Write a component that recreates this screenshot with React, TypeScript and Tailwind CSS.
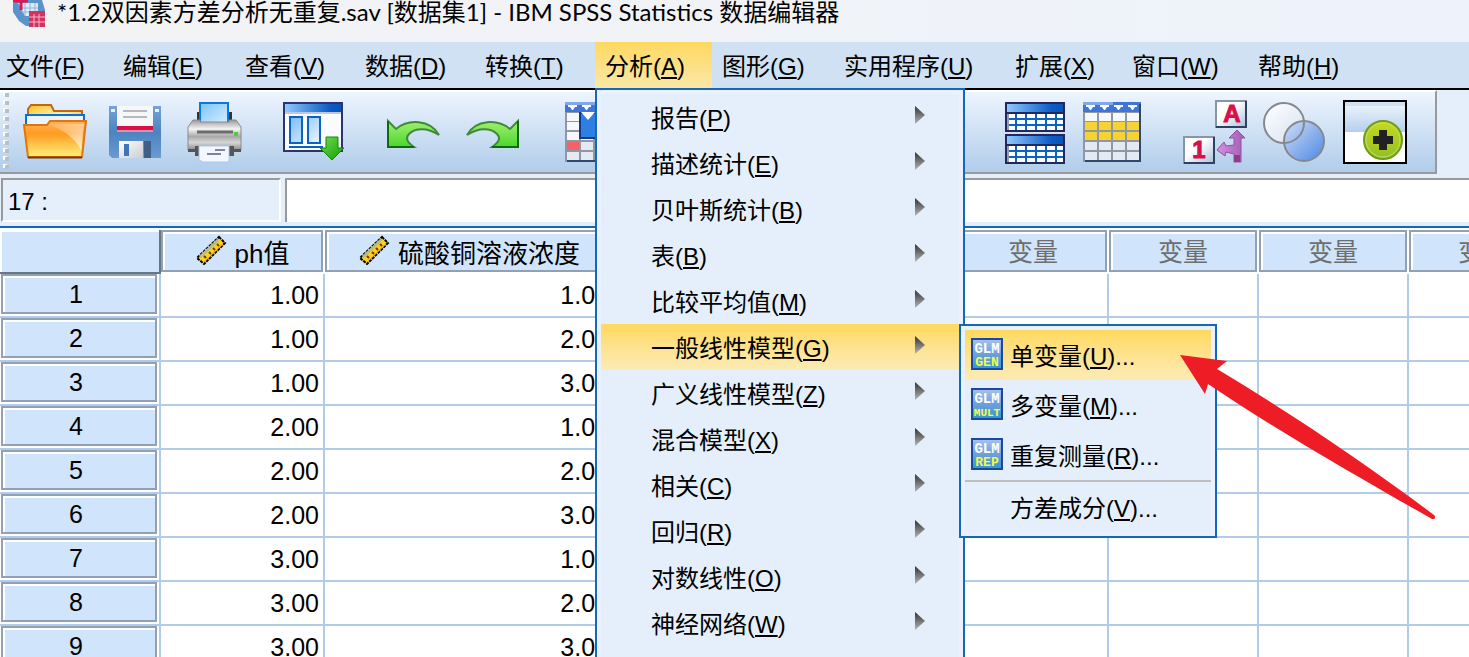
import type { ReactNode } from "react";

const MENUS = [
  { label: "文件", key: "F", width: "w-[117px]" },
  { label: "编辑", key: "E", width: "w-[122px]" },
  { label: "查看", key: "V", width: "w-[120px]" },
  { label: "数据", key: "D", width: "w-[120px]" },
  { label: "转换", key: "T", width: "w-[120px]" },
  { label: "分析", key: "A", width: "w-[117px]" },
  { label: "图形", key: "G", width: "w-[122px]" },
  { label: "实用程序", key: "U", width: "w-[171px]" },
  { label: "扩展", key: "X", width: "w-[117px]" },
  { label: "窗口", key: "W", width: "w-[126px]" },
  { label: "帮助", key: "H", width: "w-[120px]" },
];

const ANALYZE = [
  ["报告", "P"],
  ["描述统计", "E"],
  ["贝叶斯统计", "B"],
  ["表", "B"],
  ["比较平均值", "M"],
  ["一般线性模型", "G"],
  ["广义线性模型", "Z"],
  ["混合模型", "X"],
  ["相关", "C"],
  ["回归", "R"],
  ["对数线性", "O"],
  ["神经网络", "W"],
];

const GLM = [
  { label: "单变量", key: "U", tag: "GEN" },
  { label: "多变量", key: "M", tag: "MULT" },
  { label: "重复测量", key: "R", tag: "REP" },
];

const ROWS = [
  ["1.00", "1.00"],
  ["1.00", "2.00"],
  ["1.00", "3.00"],
  ["2.00", "1.00"],
  ["2.00", "2.00"],
  ["2.00", "3.00"],
  ["3.00", "1.00"],
  ["3.00", "2.00"],
  ["3.00", "3.00"],
];

const EMPTY_COLS = [0, 1, 2, 3, 4];

function Label({ label, k, dots }: { label: string; k: string; dots?: boolean }) {
  return (
    <span className="whitespace-nowrap">
      {label}(<span className="underline decoration-2 underline-offset-2">{k}</span>){dots ? "..." : ""}
    </span>
  );
}

/* ---------- toolbar icons, all on a 64px grid ---------- */

function Svg({ children }: { children: ReactNode }) {
  return (
    <svg viewBox="0 0 64 64" className="block size-16" aria-hidden="true">
      {children}
    </svg>
  );
}

function OpenIcon() {
  return (
    <Svg>
      <defs>
        <linearGradient id="fb" x1="0" y1="0" x2="1" y2="1">
          <stop offset="0" stopColor="#ffc21a" />
          <stop offset=".5" stopColor="#fff0b8" />
          <stop offset="1" stopColor="#ff9d2b" />
        </linearGradient>
        <linearGradient id="ff" x1="0" y1="0" x2="0" y2="1">
          <stop offset="0" stopColor="#ffb55e" />
          <stop offset=".35" stopColor="#ff9b1f" />
          <stop offset="1" stopColor="#fff27c" />
        </linearGradient>
        <linearGradient id="fs" x1="0" y1="0" x2="1" y2="1">
          <stop offset="0" stopColor="#fff" stopOpacity=".1" />
          <stop offset="1" stopColor="#fff" stopOpacity=".7" />
        </linearGradient>
      </defs>
      <path d="M5 20V9L8 5H28L31 11H59V26H5Z" fill="url(#fb)" stroke="#c9640c" strokeWidth="2" />
      <path d="M3 26V15H61V26" fill="#eaf3ff" stroke="#0a70d8" strokeWidth="2" />
      <path d="M1 25H24L27 21H63L59 57H5Z" fill="url(#ff)" stroke="#e8730a" strokeWidth="2" />
      <path d="M26 24H61L58 50Q50 34 26 24Z" fill="url(#fs)" />
      <path d="M5 57.500H59" stroke="#7c3b06" strokeWidth="2" />
    </Svg>
  );
}

function SaveIcon() {
  return (
    <Svg>
      <defs>
        <linearGradient id="sv" x1="0" y1="0" x2="0" y2="1">
          <stop offset="0" stopColor="#74a5d4" />
          <stop offset=".5" stopColor="#4c83c0" />
          <stop offset="1" stopColor="#6a9bd0" />
        </linearGradient>
        <linearGradient id="sh" x1="0" y1="0" x2="1" y2="1">
          <stop offset="0" stopColor="#fff" />
          <stop offset="1" stopColor="#c9cdd3" />
        </linearGradient>
      </defs>
      <path d="M6 6H58V58H9L6 55Z" fill="url(#sv)" />
      <path d="M8 9h4v3H8zM52 9h4v3h-4z" fill="#e8f1fa" />
      <path d="M14 6H50V26H14Z" fill="#f6f7f9" />
      <path d="M20 11H44M20 17H44" stroke="#b5b9bf" strokeWidth="2" />
      <path d="M14 26H50V30H14Z" fill="#d80f4a" />
      <path d="M14 30H50V32H14Z" fill="#e78aa6" />
      <path d="M16 41H40V58H16Z" fill="url(#sh)" />
      <path d="M41 41H48V58H41Z" fill="#3f5f86" />
      <path d="M21 44H26V56H21Z" fill="#3a78ba" />
    </Svg>
  );
}

function PrintIcon() {
  return (
    <Svg>
      <defs>
        <linearGradient id="pp" x1="0" y1="0" x2="1" y2="1">
          <stop offset="0" stopColor="#7cc2fb" />
          <stop offset="1" stopColor="#d8efff" />
        </linearGradient>
        <linearGradient id="pb" x1="0" y1="0" x2="0" y2="1">
          <stop offset="0" stopColor="#9a9a9a" />
          <stop offset=".3" stopColor="#f4f4f4" />
          <stop offset=".55" stopColor="#a9a9a9" />
          <stop offset=".75" stopColor="#d6d6d6" />
          <stop offset="1" stopColor="#8a8a8a" />
        </linearGradient>
      </defs>
      <path d="M14 12H17V22H14ZM46 12H49V22H46Z" fill="#333" />
      <path d="M17 3H45V24H17Z" fill="url(#pp)" stroke="#0b78df" strokeWidth="2" />
      <path d="M10 20H17V22H46V20H53L58 27V50H5V27Z" fill="url(#pb)" stroke="#8b8b8b" />
      <path d="M5 49H12V52H5ZM51 49H58V52H51Z" fill="#555" />
      <path d="M14 32H50" stroke="#6b6b6b" strokeWidth="3" />
      <path d="M51 32H55V36H51Z" fill="#4fcf3a" />
      <path d="M12 46H51V56H12Z" fill="#555" />
      <path d="M16 46H46V62H20L16 60Z" fill="#f3f7ff" stroke="#a9c6ee" />
      <path d="M32 50H42M24 54H38" stroke="#7d8598" strokeWidth="2" />
    </Svg>
  );
}

function DialogIcon() {
  return (
    <Svg>
      <defs>
        <linearGradient id="bar" x1="0" y1="0" x2="1" y2="0">
          <stop offset="0" stopColor="#8fc8ff" />
          <stop offset=".8" stopColor="#0b5cc4" />
          <stop offset="1" stopColor="#0a54b8" />
        </linearGradient>
        <linearGradient id="pn" x1="0" y1="0" x2="1" y2="1">
          <stop offset="0" stopColor="#7dbcf5" />
          <stop offset="1" stopColor="#eaf6ff" />
        </linearGradient>
        <linearGradient id="ga" x1="0" y1="0" x2="1" y2="1">
          <stop offset="0" stopColor="#6fe04c" />
          <stop offset="1" stopColor="#129a08" />
        </linearGradient>
      </defs>
      <path d="M1 3H59V51H1Z" fill="#fafcff" stroke="#2d3270" strokeWidth="2" />
      <path d="M2 4H58V12H2Z" fill="url(#bar)" />
      <path d="M2 13H58" stroke="#8a93b8" strokeWidth="1" />
      <path d="M7 17H19V43H7ZM25 17H37V43H25Z" fill="url(#pn)" stroke="#0a62c2" strokeWidth="2" />
      <path d="M6 47H40" stroke="#0a62c2" strokeWidth="2" />
      <path d="M43 37H55V48H61L49 60L37 48H43Z" fill="url(#ga)" stroke="#14840c" />
    </Svg>
  );
}

function UndoIcon({ flip }: { flip?: boolean }) {
  return (
    <Svg>
      <defs>
        <linearGradient id="un" x1="0" y1="0" x2="0" y2="1">
          <stop offset="0" stopColor="#a2f070" />
          <stop offset="1" stopColor="#4bd62d" />
        </linearGradient>
      </defs>
      <g transform={flip ? "translate(60 0) scale(-1 1)" : undefined}>
        <path
          d="M5 21L13 29C25 19 47 19 56 35C44 27 32 28 26 34C22 38 24 42 31 47H5Z"
          fill="url(#un)"
          stroke="#3f8a3a"
          strokeWidth="2"
        />
        <path d="M5 21V47H31" fill="none" stroke="#0d6b0a" strokeWidth="2" />
      </g>
    </Svg>
  );
}

function Sheet({ x = 0 }: { x?: number }) {
  return (
    <g transform={`translate(${x} 0)`}>
      <path d="M0 2H58V62H0Z" fill="#9097a3" />
      <path d="M0 2H58V12H0Z" fill="#3f74d8" />
      <path d="M0 2H30V5H0Z" fill="#7fa8ee" />
      {[2, 16, 30, 44].map((c) => (
        <g key={c}>
          <path d={`M${c + 1} 5h9v2h-2l-2 3h-1l-2-3h-2z`} fill="#fff" />
          {[13, 22, 32, 42, 52].map((r) => (
            <rect key={r} x={c} y={r} width="12" height="8" fill={r > 40 ? "#e4eaf3" : "#f6f8fb"} />
          ))}
        </g>
      ))}
      <path d="M57 4V61H2" fill="none" stroke="#33476b" strokeWidth="2" />
    </g>
  );
}

function GotoIcon() {
  return (
    <Svg>
      <Sheet x={2} />
      <path d="M4 42H16V50H4Z" fill="#f4616b" />
      <path d="M17 13H62V38H17Z" fill="#2f7fe0" stroke="#123c86" strokeWidth="2" />
      <path d="M18 12L25 20L32 12Z" fill="#fff" />
    </Svg>
  );
}

function SelectIcon() {
  return (
    <Svg>
      <Sheet />
      {[2, 16, 30, 44].map((c) => (
        <g key={c} fill="#f7d332">
          <rect x={c} y="22" width="12" height="8" />
          <rect x={c} y="32" width="12" height="8" />
        </g>
      ))}
    </Svg>
  );
}

function SplitIcon() {
  return (
    <Svg>
      {[2, 34].map((y) => (
        <g key={y} transform={`translate(2 ${y})`}>
          <path d="M0 0H60V30H0Z" fill="#23275e" />
          <path d="M2 2H58V10H2Z" fill="url(#bar)" />
          <path d="M2 12H58V28H2Z" fill="#0a62c2" />
          <path d="M2 12H4V28H2Z" fill="#9a9ab0" />
          {[4, 12, 22, 32, 42, 52].map((x, i) => (
            <g key={x} fill="#fff">
              <rect x={x} y="12" width={[6, 8, 8, 8, 8, 6][i]} height="4" />
              <rect x={x} y="18" width={[6, 8, 8, 8, 8, 6][i]} height="4" />
              <rect x={x} y="24" width={[6, 8, 8, 8, 8, 6][i]} height="4" />
            </g>
          ))}
        </g>
      ))}
    </Svg>
  );
}

function ValueLabelsIcon() {
  return (
    <Svg>
      <defs>
        <linearGradient id="tl" x1="0" y1="0" x2="1" y2="1">
          <stop offset=".4" stopColor="#fff" />
          <stop offset="1" stopColor="#a9bfdc" />
        </linearGradient>
        <linearGradient id="pu" x1="0" y1="0" x2="1" y2="0">
          <stop offset="0" stopColor="#d292dc" />
          <stop offset="1" stopColor="#a35bb4" />
        </linearGradient>
      </defs>
      <path d="M33 1H63V27H33Z" fill="url(#tl)" stroke="#8795ab" strokeWidth="2" />
      <path d="M63 1V27H33" fill="none" stroke="#2d4162" strokeWidth="2" />
      <path d="M1 37H31V63H1Z" fill="url(#tl)" stroke="#8795ab" strokeWidth="2" />
      <path d="M31 37V63H1" fill="none" stroke="#2d4162" strokeWidth="2" />
      <text x="49" y="22" textAnchor="middle" fontSize="24" fontWeight="900" fill="#d80f4a" stroke="#d80f4a" fontFamily="Liberation Sans, sans-serif">
        A
      </text>
      <text x="16" y="58" textAnchor="middle" fontSize="24" fontWeight="900" fill="#d80f4a" stroke="#d80f4a" fontFamily="Liberation Sans, sans-serif">
        1
      </text>
      <path
        d="M54 30L62 38H58V62H51V54L43 52L42 56L34 50L41 42L43 46L51 45V38H46Z"
        fill="url(#pu)"
        stroke="#9450a6"
      />
      <path d="M51 55H57V62H51Z" fill="#8c3f86" />
    </Svg>
  );
}

function SetsIcon() {
  return (
    <Svg>
      <defs>
        <linearGradient id="c1" x1="0" y1="0" x2="1" y2="1">
          <stop offset="0" stopColor="#fff" />
          <stop offset="1" stopColor="#d6e1f2" />
        </linearGradient>
        <linearGradient id="c2" x1="0" y1="0" x2="1" y2="1">
          <stop offset="0" stopColor="#cfdff8" />
          <stop offset="1" stopColor="#4d87e2" />
        </linearGradient>
      </defs>
      <circle cx="21" cy="23" r="20" fill="url(#c1)" />
      <circle cx="41" cy="41" r="20" fill="url(#c2)" />
      <g fill="none" stroke="#85898f" strokeWidth="2">
        <circle cx="21" cy="23" r="20" />
        <circle cx="41" cy="41" r="20" />
      </g>
    </Svg>
  );
}

function CustomizeIcon() {
  return (
    <Svg>
      <defs>
        <linearGradient id="cb" x1="0" y1="0" x2="0" y2="1">
          <stop offset="0" stopColor="#e9f2fc" />
          <stop offset="1" stopColor="#b4cfeb" />
        </linearGradient>
        <linearGradient id="cg" x1="0" y1="0" x2="0" y2="1">
          <stop offset="0" stopColor="#c9d91f" />
          <stop offset="1" stopColor="#8fc023" />
        </linearGradient>
      </defs>
      <path d="M1 1H63V63H1Z" fill="#fff" stroke="#000" strokeWidth="2" />
      <path d="M2 2H62V6H2Z" fill="#cfe1f2" />
      <path d="M2 6H62V32H2Z" fill="url(#cb)" />
      <circle cx="40" cy="40" r="19" fill="url(#cg)" stroke="#6f9e16" strokeWidth="2" />
      <circle cx="40" cy="40" r="17" fill="none" stroke="#c5e070" />
      <path d="M36 30H44V36H50V44H44V50H36V44H30V36H36Z" fill="#222" />
    </Svg>
  );
}

function ToolButton({ label, children }: { label: string; children: ReactNode }) {
  return (
    <button type="button" aria-label={label} className="size-16 shrink-0">
      {children}
    </button>
  );
}

function Ruler() {
  return (
    <svg viewBox="0 0 32 32" className="size-8 shrink-0" aria-hidden="true">
      <path d="M24 2L30 8L9 29L2 23Z" fill="#ffcf1c" stroke="#000" strokeWidth="2" strokeDasharray="3 1" />
      <path d="M23 5L5 22" stroke="#b9bb86" strokeWidth="3" />
      <path d="M28 9L9 27" stroke="#ff9f1c" strokeWidth="1" />
      <path d="M22 9l2 2M18 13l2 2M14 17l2 2M9 21l2 2" stroke="#5c4a00" strokeWidth="2" />
    </svg>
  );
}

function AppIcon() {
  return (
    <svg viewBox="0 0 34 30" className="h-[30px] w-[34px]" aria-hidden="true">
      <path d="M3 0H29L32 10V26H13L6 21L0 12V3Z" fill="#5b93cb" />
      <path d="M5 3H25V16H12Z" fill="#dfeaf6" />
      <path d="M12 3V16M17 3V16M22 3V16M6 8H25M8 12H25" stroke="#8db4dc" strokeWidth="1" />
      <path d="M0 1H15M8 0V10" stroke="#e0164e" strokeWidth="3" />
      <path d="M16 11H32V27H16Z" fill="#d4335f" />
      <path d="M21 14V27M26 14V27M16 17H32M16 22H32" stroke="#f3b8c8" strokeWidth="1" />
    </svg>
  );
}

function GlmIcon({ tag }: { tag: string }) {
  return (
    <svg viewBox="0 0 32 32" className="size-8 shrink-0" aria-hidden="true">
      <defs>
        <linearGradient id="gl" x1="0" y1="0" x2="0" y2="1">
          <stop offset="0" stopColor="#a9c2ea" />
          <stop offset=".5" stopColor="#6f9fd8" />
          <stop offset="1" stopColor="#2f9ad4" />
        </linearGradient>
      </defs>
      <path d="M1 1H31V31H1Z" fill="url(#gl)" stroke="#1b48a0" strokeWidth="2" />
      <g textAnchor="middle" fontFamily="Liberation Mono, monospace" fontWeight="700">
        <text x="16" y="15" fontSize="14" fill="#fff">
          GLM
        </text>
        <text x="16" y="28" fontSize={tag.length > 3 ? 11 : 13} fill="#f6f94e">
          {tag}
        </text>
      </g>
    </svg>
  );
}

function GlmMenu() {
  return (
    <div className="absolute left-full top-0 z-20 w-[258px] border-2 border-[#1269b9] bg-[#e4effb] p-1 shadow-[inset_0_0_0_4px_#eaf0fd]">
      {GLM.map((m, i) => (
        <button
          key={m.tag}
          type="button"
          className={`flex h-[50px] w-full items-center gap-[7px] pb-0.5 pl-1.5 ${
            i === 0 ? "bg-linear-to-b from-[#ffd95c] to-[#fcebb5]" : ""
          }`}
        >
          <GlmIcon tag={m.tag} />
          <span className="pt-1.5">
            <Label label={m.label} k={m.key} dots />
          </span>
        </button>
      ))}
      <div className="h-0.5 bg-[#bfbfbf]" />
      <button type="button" className="flex h-[50px] w-full items-center pl-[45px] pt-1">
        <Label label="方差成分" k="V" dots />
      </button>
      <svg viewBox="0 0 258 168" className="pointer-events-none absolute left-[219px] top-[29px] h-[168px] w-[258px]" aria-hidden="true">
        <path d="M0 0L47 6L37 14C120 64 190 112 254 160Q257 164 252 164C184 125 104 80 28 29L25 39Z" fill="#ee1c25" />
      </svg>
    </div>
  );
}

function AnalyzeMenu() {
  return (
    <div className="absolute left-0 top-full z-10 w-[370px] border-2 border-[#1269b9] bg-[#e4effb] p-1 shadow-[inset_0_0_0_4px_#eaf0fd]">
      {ANALYZE.map(([label, k]) => (
        <div key={label} className="relative">
          <button
            type="button"
            className={`flex h-[46px] w-full items-center justify-between pl-[50px] pr-[34px] ${
              k === "G" ? "bg-linear-to-b from-[#ffd95c] to-[#fcebb5]" : ""
            }`}
          >
            <span className="pt-1">
              <Label label={label} k={k} />
            </span>
            <svg viewBox="0 0 10 22" className="h-[22px] w-2.5" aria-hidden="true">
              <defs>
                <linearGradient id="ar" x1="0" y1="0" x2="0" y2="1">
                  <stop offset="0" stopColor="#333" />
                  <stop offset="1" stopColor="#b5b5b5" />
                </linearGradient>
              </defs>
              <path d="M0 0L10 9L0 18Z" fill="url(#ar)" />
            </svg>
          </button>
          {k === "G" && <GlmMenu />}
        </div>
      ))}
      <div className="h-20" />
    </div>
  );
}

const headBox =
  "flex h-[42px] items-center justify-center border-2 border-[#92a0b3] bg-[#d0e4fb] shadow-[inset_2px_2px_0_#fff]";

function DataGrid() {
  return (
    <div className="min-h-0 grow overflow-hidden bg-white pt-0.5">
      <table className="w-[1559px] table-fixed border-separate border-spacing-0 text-[25px] leading-8">
        <colgroup>
          <col className="w-[161px]" />
          <col className="w-[164px]" />
          <col className="w-[290px]" />
          <col className="w-[194px]" />
          {EMPTY_COLS.map((c) => (
            <col key={c} className="w-[150px]" />
          ))}
        </colgroup>
        <thead>
          <tr className="h-11">
            <td className="p-0 align-top">
              <div className="h-11 border-b-2 border-r-2 border-[#687586] bg-[#d0e4fb] shadow-[inset_2px_2px_0_#fff]" />
            </td>
            <th scope="col" className="p-0 pr-0.5 align-top font-normal">
              <div className={headBox + " gap-2"}>
                <Ruler />
                <span className="pt-1.5 text-[26px]">ph值</span>
              </div>
            </th>
            <th scope="col" className="p-0 pr-0.5 align-top font-normal">
              <div className={headBox + " gap-2"}>
                <Ruler />
                <span className="pt-1.5 text-[26px]">硫酸铜溶液浓度</span>
              </div>
            </th>
            <td className="p-0 pr-0.5 align-top">
              <div className={headBox} />
            </td>
            {EMPTY_COLS.map((c) => (
              <th key={c} scope="col" className="p-0 pr-0.5 align-top font-normal text-[#6e6e6e]">
                <div className={headBox + " pt-0.5"}>变量</div>
              </th>
            ))}
          </tr>
        </thead>
        <tbody>
          {ROWS.map((row, i) => (
            <tr key={i} className="h-11">
              <th scope="row" className="border-b-2 border-r-2 border-[#b0cce8] p-0 pb-0.5 pl-px pr-0.5 font-normal">
                <div className="flex h-10 items-center justify-center border-2 border-[#92a0b3] bg-[#d0e4fb] pr-1.5 shadow-[inset_2px_2px_0_#fff]">
                  {i + 1}
                </div>
              </th>
              {row.map((v, c) => (
                <td key={c} className="border-b-2 border-r-2 border-[#b0cce8] p-0 pr-1 text-right">
                  {v}
                </td>
              ))}
              <td className="border-b-2 border-r-2 border-[#b0cce8] p-0" />
              {EMPTY_COLS.map((c) => (
                <td key={c} className="border-b-2 border-r-2 border-[#b0cce8] p-0" />
              ))}
            </tr>
          ))}
        </tbody>
      </table>
    </div>
  );
}

export default function App() {
  return (
    <div className="flex h-screen flex-col overflow-hidden bg-[#e4effb] font-['Liberation_Sans','Noto_Sans_CJK_SC',sans-serif] text-2xl leading-8 text-black">
      <header className="flex h-[42px] shrink-0 items-start gap-2.5 bg-linear-to-r from-[#f3f3f3] to-[#edf2fb] pl-[13px]">
        <AppIcon />
        <h1 className="-mt-1 whitespace-nowrap font-['Lato','Noto_Sans_CJK_SC',sans-serif]">
          *1.2双因素方差分析无重复.sav [数据集1] - IBM SPSS Statistics 数据编辑器
        </h1>
      </header>

      <nav className="flex h-12 shrink-0 border-b-2 border-black bg-[#cfe1f2]">
        <div className="-ml-1 flex h-[46px]">
          {MENUS.map((m) => (
            <div key={m.key} className={`relative shrink-0 ${m.width}`}>
              <button
                type="button"
                className={`flex h-full w-full items-center pl-2.5 pt-1 ${
                  m.key === "A" ? "bg-linear-to-b from-[#ffd95c] to-[#fbe6a6]" : ""
                }`}
              >
                <Label label={m.label} k={m.key} />
              </button>
              {m.key === "A" && <AnalyzeMenu />}
            </div>
          ))}
        </div>
      </nav>

      <div className="flex shrink-0">
        <div className="flex h-[84px] items-start gap-9 border-b-2 border-r-2 border-t-2 border-b-[#999] border-r-[#999] border-t-white bg-linear-to-b from-[#eef5fe] to-[#b0cdea] pl-[3px] pr-7">
          <div className="flex gap-3.5">
            <svg viewBox="0 0 6 80" className="h-20 w-1.5" aria-hidden="true">
              {[0, 1, 2, 3, 4, 5, 6, 7, 8, 9].map((n) => (
                <g key={n}>
                  <rect x="0" y={n * 8} width="4" height="4" fill="#fff" />
                  <rect x="2" y={n * 8 + 1} width="4" height="4" fill="#b9bfc8" />
                </g>
              ))}
            </svg>
            <div className="flex gap-4 pt-2">
              <ToolButton label="打开"><OpenIcon /></ToolButton>
              <ToolButton label="保存"><SaveIcon /></ToolButton>
              <ToolButton label="打印"><PrintIcon /></ToolButton>
            </div>
          </div>
          <div className="pt-2">
            <ToolButton label="重新调用对话框"><DialogIcon /></ToolButton>
          </div>
          <div className="flex gap-4 pt-2">
            <ToolButton label="撤销"><UndoIcon /></ToolButton>
            <ToolButton label="重做"><UndoIcon flip /></ToolButton>
          </div>
          <div className="pt-2">
            <ToolButton label="转到个案"><GotoIcon /></ToolButton>
          </div>
          <div className="ml-[340px] flex gap-4 pt-2">
            <ToolButton label="拆分文件"><SplitIcon /></ToolButton>
            <ToolButton label="选择个案"><SelectIcon /></ToolButton>
          </div>
          <div className="flex gap-4 pt-2">
            <ToolButton label="值标签"><ValueLabelsIcon /></ToolButton>
            <ToolButton label="变量集"><SetsIcon /></ToolButton>
            <ToolButton label="定制工具栏"><CustomizeIcon /></ToolButton>
          </div>
        </div>
      </div>

      <div className="flex shrink-0 gap-1 border-b-2 border-[#1269b9] py-1 pl-px">
        <label htmlFor="cell" className="h-11 w-[280px] border-2 border-b-white border-l-[#999] border-r-white border-t-[#999] pl-[5px] pt-1.5">
          17 :
        </label>
        <input id="cell" type="text" className="h-11 min-w-0 grow border-l-2 border-t-2 border-[#999] bg-white px-1 outline-none" />
      </div>

      <DataGrid />
    </div>
  );
}
